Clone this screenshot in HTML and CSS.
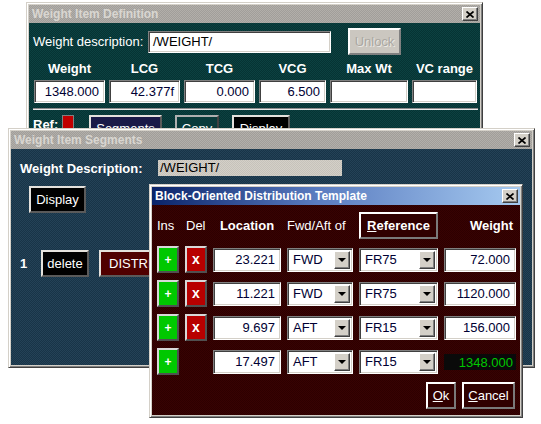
FILE: index.html
```html
<!DOCTYPE html>
<html>
<head>
<meta charset="utf-8">
<title>Weight Item</title>
<link rel="stylesheet" href="styles.css">
</head>
<body>
<div class="desktop">

  <div class="win w1">
    <div class="title inactive">
      <span>Weight Item Definition</span>
      <div class="close"><svg width="8" height="7" viewBox="0 0 8 7"><path d="M0.5 0.5L7.5 6.5M7.5 0.5L0.5 6.5" stroke="#000" stroke-width="1.7"/></svg></div>
    </div>
    <div class="body b1">
      <div class="row1">
        <span class="lbl1">Weight description:</span>
        <div class="field desc">/WEIGHT/</div>
        <div class="btn unlock">Unlock</div>
      </div>
      <div class="grid6">
        <div class="hd">Weight</div>
        <div class="hd">LCG</div>
        <div class="hd">TCG</div>
        <div class="hd">VCG</div>
        <div class="hd">Max Wt</div>
        <div class="hd">VC range</div>
        <div class="field num">1348.000</div>
        <div class="field num">42.377f</div>
        <div class="field num">0.000</div>
        <div class="field num">6.500</div>
        <div class="field num"></div>
        <div class="field num"></div>
      </div>
      <div class="divider"></div>
      <div class="row3">
        <span class="reflbl">Ref:</span>
        <span class="refbox"></span>
        <div class="btn seg">Segments</div>
        <div class="btn copy">Copy</div>
        <div class="btn disp1">Display</div>
      </div>
    </div>
  </div>

  <div class="win w2">
    <div class="title inactive">
      <span>Weight Item Segments</span>
      <div class="close"><svg width="8" height="7" viewBox="0 0 8 7"><path d="M0.5 0.5L7.5 6.5M7.5 0.5L0.5 6.5" stroke="#000" stroke-width="1.7"/></svg></div>
    </div>
    <div class="body b2">
      <div class="row2a">
        <span class="lbl2">Weight Description:</span>
        <div class="grayfield">/WEIGHT/</div>
      </div>
      <div class="btn blk disp2">Display</div>
      <div class="row2c">
        <span class="idx">1</span>
        <div class="btn blk del">delete</div>
        <div class="btn distr">DISTRIBUTE</div>
      </div>
    </div>
  </div>

  <div class="win w3">
    <div class="title active">
      <span>Block-Oriented Distribution Template</span>
      <div class="close"><svg width="8" height="7" viewBox="0 0 8 7"><path d="M0.5 0.5L7.5 6.5M7.5 0.5L0.5 6.5" stroke="#000" stroke-width="1.7"/></svg></div>
    </div>
    <div class="body b3">
      <div class="grid3">
        <div class="h3">Ins</div>
        <div class="h3 hdel">Del</div>
        <div class="h3 bold center">Location</div>
        <div class="h3 nowrap">Fwd/Aft of</div>
        <div class="btn refbtn"><span><u>R</u>eference</span></div>
        <div class="h3 bold right">Weight</div>

        <div class="btn ins">+</div>
        <div class="btn delx">x</div>
        <div class="field num cell">23.221</div>
        <div class="field combo cell"><span class="ctext">FWD</span><span class="dd"><i></i></span></div>
        <div class="field combo cell"><span class="ctext">FR75</span><span class="dd"><i></i></span></div>
        <div class="field num cell">72.000</div>

        <div class="btn ins">+</div>
        <div class="btn delx">x</div>
        <div class="field num cell">11.221</div>
        <div class="field combo cell"><span class="ctext">FWD</span><span class="dd"><i></i></span></div>
        <div class="field combo cell"><span class="ctext">FR75</span><span class="dd"><i></i></span></div>
        <div class="field num cell">1120.000</div>

        <div class="btn ins">+</div>
        <div class="btn delx">x</div>
        <div class="field num cell">9.697</div>
        <div class="field combo cell"><span class="ctext">AFT</span><span class="dd"><i></i></span></div>
        <div class="field combo cell"><span class="ctext">FR15</span><span class="dd"><i></i></span></div>
        <div class="field num cell">156.000</div>

        <div class="btn ins">+</div>
        <div></div>
        <div class="field num cell">17.497</div>
        <div class="field combo cell"><span class="ctext">AFT</span><span class="dd"><i></i></span></div>
        <div class="field combo cell"><span class="ctext">FR15</span><span class="dd"><i></i></span></div>
        <div class="total">1348.000</div>

        <div class="actions">
          <div class="btn ok"><span><u>O</u>k</span></div>
          <div class="btn cancel"><span><u>C</u>ancel</span></div>
        </div>
      </div>
    </div>
  </div>

</div>
</body>
</html>
```

FILE: styles.css
```css
html, body {
  margin: 0;
  padding: 0;
}

body {
  background: #ffffff;
  font-family: "Liberation Sans", Arial, sans-serif;
  font-size: 13px;
  color: #ffffff;
}

.desktop {
  position: relative;
  width: 541px;
  height: 424px;
  overflow: hidden;
  background: #ffffff;
}

/* windows */
.win {
  position: absolute;
  box-sizing: border-box;
  background: #d4d0c8;
  border: 1px solid;
  border-color: #d4d0c8 #404040 #404040 #d4d0c8;
  box-shadow: inset 1px 1px #ffffff, inset -1px -1px #808080;
  padding: 2px;
  display: flex;
  flex-direction: column;
}

.w1 { left: 26px; top: 2px; width: 457px; height: 150px; }
.w2 { left: 8px; top: 128px; width: 527px; height: 240px; }
.w3 { left: 149px; top: 184px; width: 374px; height: 234px; }

.title {
  flex: none;
  height: 18px;
  display: flex;
  align-items: center;
  justify-content: space-between;
  padding: 0 2px 0 3px;
  font: bold 12px "Liberation Sans", Arial, sans-serif;
}

.inactive {
  background: repeating-conic-gradient(#a19e9a 0 25%, #b2afaa 0 50%) 0 0 / 2px 2px;
  color: #d9d6d1;
}

.active {
  background: linear-gradient(90deg, #0a246a 0%, #5a7cc0 45%, #a6caf0 100%);
  color: #ffffff;
}

.close {
  box-sizing: border-box;
  width: 16px;
  height: 14px;
  background: #d4d0c8;
  border: 1px solid;
  border-color: #ffffff #404040 #404040 #ffffff;
  box-shadow: inset -1px -1px #808080;
  display: flex;
  align-items: center;
  justify-content: center;
}

.body {
  flex: 1;
  min-height: 0;
  overflow: hidden;
}

.b1 {
  background: repeating-conic-gradient(#063333 0 25%, #0c4141 0 50%) 0 0 / 2px 2px;
  padding: 5px 0 0 4px;
}

.b2 {
  background: repeating-conic-gradient(#183447 0 25%, #244257 0 50%) 0 0 / 2px 2px;
  padding: 11px 0 0 9px;
}

.b3 {
  background: repeating-conic-gradient(#2d0000 0 25%, #380202 0 50%) 0 0 / 2px 2px;
  padding: 7px 0 0 5px;
}

/* generic controls */
.field {
  box-sizing: border-box;
  background: #ffffff;
  color: #000033;
  border: 1px solid;
  border-color: #808080 #ffffff #ffffff #808080;
  box-shadow: inset 1px 1px #404040, inset -1px -1px #d4d0c8;
  white-space: nowrap;
  overflow: hidden;
}

.num {
  text-align: right;
  padding-right: 5px;
  display: flex;
  align-items: center;
  justify-content: flex-end;
}

.btn {
  box-sizing: border-box;
  border: 2px solid;
  border-color: #e4e1dc #5a5a5a #5a5a5a #e4e1dc;
  display: flex;
  align-items: center;
  justify-content: center;
  color: #ffffff;
  white-space: nowrap;
  overflow: hidden;
}

.blk { background: #000000; }

/* window 1 */
.row1 {
  display: flex;
  align-items: center;
  height: 27px;
}

.lbl1 { width: 115px; }

.desc {
  width: 183px;
  height: 22px;
  padding-left: 4px;
  display: flex;
  align-items: center;
  color: #000000;
}

.unlock {
  margin-left: 17px;
  width: 53px;
  height: 27px;
  background: #cbc7c0;
  color: #aaa7a2;
  text-shadow: 1px 1px #ece9e4;
  border-color: #ffffff #808080 #808080 #ffffff;
}

.grid6 {
  display: grid;
  grid-template-columns: 71px 71px 71px 67px 78px 65px;
  grid-template-rows: 23px 23px;
  column-gap: 4px;
  margin: 2px 0 0 1px;
}

.hd {
  font-weight: bold;
  text-align: center;
  line-height: 23px;
}

.divider {
  width: 445px;
  margin-top: 5px;
  border-top: 1px solid #8a8a8a;
  border-bottom: 1px solid #e8e8e8;
}

.row3 {
  display: flex;
  align-items: flex-start;
  margin-top: 5px;
}

.reflbl {
  width: 29px;
  font-weight: bold;
  line-height: 20px;
}

.refbox {
  box-sizing: border-box;
  width: 12px;
  height: 20px;
  background: #c00000;
  border: 1px solid #808080;
}

.seg {
  margin-left: 15px;
  width: 73px;
  height: 26px;
  background: #1a1a48;
}

.copy {
  margin-left: 13px;
  width: 44px;
  height: 26px;
  background: #0a3b3b;
  border-color: #b0b0b0 #404040 #404040 #b0b0b0;
}

.disp1 {
  margin-left: 13px;
  width: 58px;
  height: 26px;
  background: #000000;
}

/* window 2 */
.row2a {
  display: flex;
  align-items: center;
  height: 16px;
}

.lbl2 {
  width: 138px;
  font-weight: bold;
}

.grayfield {
  width: 184px;
  height: 16px;
  background: repeating-conic-gradient(#d4d0c8 0 25%, #c6c2ba 0 50%) 0 0 / 2px 2px;
  color: #000000;
  padding-left: 2px;
  box-sizing: border-box;
  line-height: 16px;
}

.disp2 {
  margin: 10px 0 0 9px;
  width: 57px;
  height: 27px;
}

.row2c {
  display: flex;
  align-items: center;
  margin-top: 37px;
  height: 27px;
}

.idx {
  width: 21px;
  font-weight: bold;
}

.del {
  width: 48px;
  height: 27px;
}

.distr {
  margin-left: 10px;
  width: 110px;
  height: 27px;
  background: #500000;
  justify-content: flex-start;
  padding-left: 8px;
}

/* window 3 */
.grid3 {
  display: grid;
  grid-template-columns: 22px 22px 68px 66px 79px 72px;
  grid-auto-rows: 27px;
  column-gap: 6px;
  row-gap: 7px;
}

.h3 {
  display: flex;
  align-items: center;
}

.hdel { padding-left: 1px; }
.bold { font-weight: bold; }
.center { justify-content: center; }
.right { justify-content: flex-end; padding-right: 3px; }
.nowrap { white-space: nowrap; }

.refbtn {
  background: #300000;
  font-weight: bold;
  border-color: #ffffff #7a7a7a #7a7a7a #ffffff;
}

.ins {
  background: #00c800;
  font-weight: bold;
  font-size: 12px;
  border-color: #d8d8d8 #505050 #505050 #d8d8d8;
}

.delx {
  background: #b80000;
  font-weight: bold;
  font-size: 14px;
  padding-bottom: 2px;
  border-color: #d8d8d8 #505050 #505050 #d8d8d8;
}

.cell {
  align-self: center;
  height: 24px;
}

.combo {
  display: flex;
  align-items: stretch;
  padding: 2px;
}

.ctext {
  flex: 1;
  display: flex;
  align-items: center;
  padding-left: 3px;
}

.dd {
  box-sizing: border-box;
  width: 16px;
  background: #d4d0c8;
  border: 1px solid;
  border-color: #ffffff #404040 #404040 #ffffff;
  box-shadow: inset -1px -1px #808080;
  display: flex;
  align-items: center;
  justify-content: center;
}

.dd i {
  width: 0;
  height: 0;
  border-left: 4px solid transparent;
  border-right: 4px solid transparent;
  border-top: 4px solid #000000;
}

.total {
  align-self: center;
  height: 16px;
  margin-top: 1px;
  background: #0a0a0a;
  color: #00c800;
  display: flex;
  align-items: center;
  justify-content: flex-end;
  padding-right: 3px;
}

.actions {
  grid-column: 5 / 7;
  display: flex;
  justify-content: flex-end;
  gap: 6px;
  margin-right: 1px;
}

.ok, .cancel {
  height: 27px;
  background: #300000;
  border-color: #ffffff #7a7a7a #7a7a7a #ffffff;
}

.ok { width: 30px; }
.cancel { width: 53px; }
```
